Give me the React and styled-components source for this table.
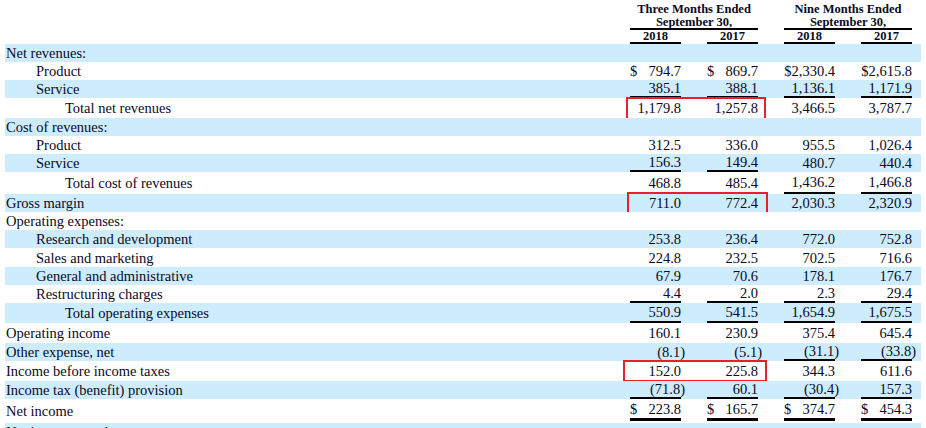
import React from 'react';
import styled, { createGlobalStyle } from 'styled-components';

const GlobalStyle = createGlobalStyle`
  html, body { margin: 0; padding: 0; background: #fff; }
  body { font-family: "Liberation Serif", "Times New Roman", serif; color: #0a0a1e; }
`;

const Sheet = styled.div`
  width: 926px;
  height: 428px;
  overflow: hidden;
  padding: 0 5px;
  box-sizing: border-box;
`;

const cols = 'grid-template-columns: 1fr repeat(4, 51px); column-gap: 26px; padding-right: 9px;';

const Head = styled.div`
  display: grid;
  ${cols}
  height: 44px;
  grid-template-rows: 30px 14px;
  font-weight: bold;
  font-size: 12.5px;
  line-height: 12.5px;
`;

const Group = styled.div`
  grid-column: ${p => p.col} / span 2;
  grid-row: 1;
  text-align: center;
  padding-top: 3px;
  border-bottom: 2px solid #000;
  box-sizing: border-box;
`;

const Year = styled.div`
  grid-row: 2;
  grid-column: ${p => p.col};
  text-align: center;
  border-bottom: 2px solid #000;
  box-sizing: border-box;
`;

const Row = styled.div`
  position: relative;
  display: grid;
  ${cols}
  height: ${p => p.h || 18}px;
  margin-top: ${p => p.mt || 0}px;
  background: ${p => (p.shade ? '#cdecfd' : '#fff')};
  font-size: 14.5px;
`;

const Label = styled.div`
  padding-left: ${p => [1, 31, 60][p.level || 0]}px;
  align-self: center;
  white-space: nowrap;
  line-height: 16px;
`;

const Cell = styled.div`
  display: flex;
  justify-content: space-between;
  align-items: center;
  height: ${p => p.ch || '100%'};
  box-sizing: border-box;
  border-bottom: ${p => (p.rule === 2 ? '3.5px' : p.rule ? '2px' : '0')} solid #000;
  line-height: 16px;
  white-space: nowrap;
`;

const Mark = styled.div`
  position: absolute;
  left: ${p => p.left}px;
  width: ${p => p.w}px;
  top: ${p => p.top}px;
  bottom: ${p => p.bottom}px;
  border: 2.5px solid #e8202b;
  box-sizing: border-box;
  pointer-events: none;
`;

const rows = [
  { label: 'Net revenues:', level: 0 },
  { label: 'Product', level: 1, vals: ['794.7', '869.7', '2,330.4', '2,615.8'], dollar: [1, 1, 0, 0], dollarTight: [0, 0, 1, 1] },
  { label: 'Service', level: 1, vals: ['385.1', '388.1', '1,136.1', '1,171.9'], rules: [1, 1, 1, 1] },
  { label: 'Total net revenues', level: 2, h: 20, vals: ['1,179.8', '1,257.8', '3,466.5', '3,787.7'], mark: { left: 621, w: 140, top: -1, bottom: -2 } },
  { label: 'Cost of revenues:', level: 0 },
  { label: 'Product', level: 1, vals: ['312.5', '336.0', '955.5', '1,026.4'] },
  { label: 'Service', level: 1, vals: ['156.3', '149.4', '480.7', '440.4'], rules: [1, 1, 0, 0] },
  { label: 'Total cost of revenues', level: 2, h: 22, vals: ['468.8', '485.4', '1,436.2', '1,466.8'], rules: [0, 0, 1, 1] },
  { label: 'Gross margin', level: 0, vals: ['711.0', '772.4', '2,030.3', '2,320.9'], mark: { left: 622, w: 141, top: -2, bottom: -3 } },
  { label: 'Operating expenses:', level: 0 },
  { label: 'Research and development', level: 1, vals: ['253.8', '236.4', '772.0', '752.8'] },
  { label: 'Sales and marketing', level: 1, vals: ['224.8', '232.5', '702.5', '716.6'], mt: 1 },
  { label: 'General and administrative', level: 1, vals: ['67.9', '70.6', '178.1', '176.7'] },
  { label: 'Restructuring charges', level: 1, vals: ['4.4', '2.0', '2.3', '29.4'], rules: [1, 1, 1, 1] },
  { label: 'Total operating expenses', level: 2, h: 20, vals: ['550.9', '541.5', '1,654.9', '1,675.5'], rules: [1, 1, 1, 1] },
  { label: 'Operating income', level: 0, h: 20, vals: ['160.1', '230.9', '375.4', '645.4'] },
  { label: 'Other expense, net', level: 0, vals: ['(8.1)', '(5.1)', '(31.1)', '(33.8)'], rules: [0, 0, 1, 1], paren: true },
  { label: 'Income before income taxes', level: 0, h: 20, vals: ['152.0', '225.8', '344.3', '611.6'], mark: { left: 618, w: 144, top: -1, bottom: -1 } },
  { label: 'Income tax (benefit) provision', level: 0, vals: ['(71.8)', '60.1', '(30.4)', '157.3'], rules: [1, 1, 1, 1], paren: true },
  { label: 'Net income', level: 0, h: 24, ch: '22px', vals: ['223.8', '165.7', '374.7', '454.3'], dollar: [1, 1, 1, 1], rules: [2, 2, 2, 2] },
  { label: 'Net income per share:', level: 0 },
];

const Num = styled.span`
  margin-left: auto;
  margin-right: ${p => (p.close ? '-4px' : '0')};
`;

function Value({ v, dollar, tight, paren }) {
  const close = paren && v.endsWith(')');
  const shown = tight ? '$' + v : v;
  return (
    <>
      {dollar ? <span>$</span> : null}
      <Num close={close ? 1 : 0}>{shown}</Num>
    </>
  );
}

export default function App() {
  return (
    <Sheet>
      <GlobalStyle />
      <Head>
        <Group col={2}>Three Months Ended<br />September 30,</Group>
        <Group col={4}>Nine Months Ended<br />September 30,</Group>
        <Year col={2}>2018</Year>
        <Year col={3}>2017</Year>
        <Year col={4}>2018</Year>
        <Year col={5}>2017</Year>
      </Head>
      {rows.map((r, i) => (
        <Row key={i} shade={i % 2 === 0} h={r.h} mt={r.mt}>
          <Label level={r.level}>{r.label}</Label>
          {r.vals &&
            r.vals.map((v, j) => (
              <Cell key={j} rule={r.rules ? r.rules[j] : 0} ch={r.ch}>
                <Value
                  v={v}
                  dollar={r.dollar && r.dollar[j]}
                  tight={r.dollarTight && r.dollarTight[j]}
                  paren={r.paren}
                />
              </Cell>
            ))}
          {r.mark && <Mark {...r.mark} />}
        </Row>
      ))}
    </Sheet>
  );
}
